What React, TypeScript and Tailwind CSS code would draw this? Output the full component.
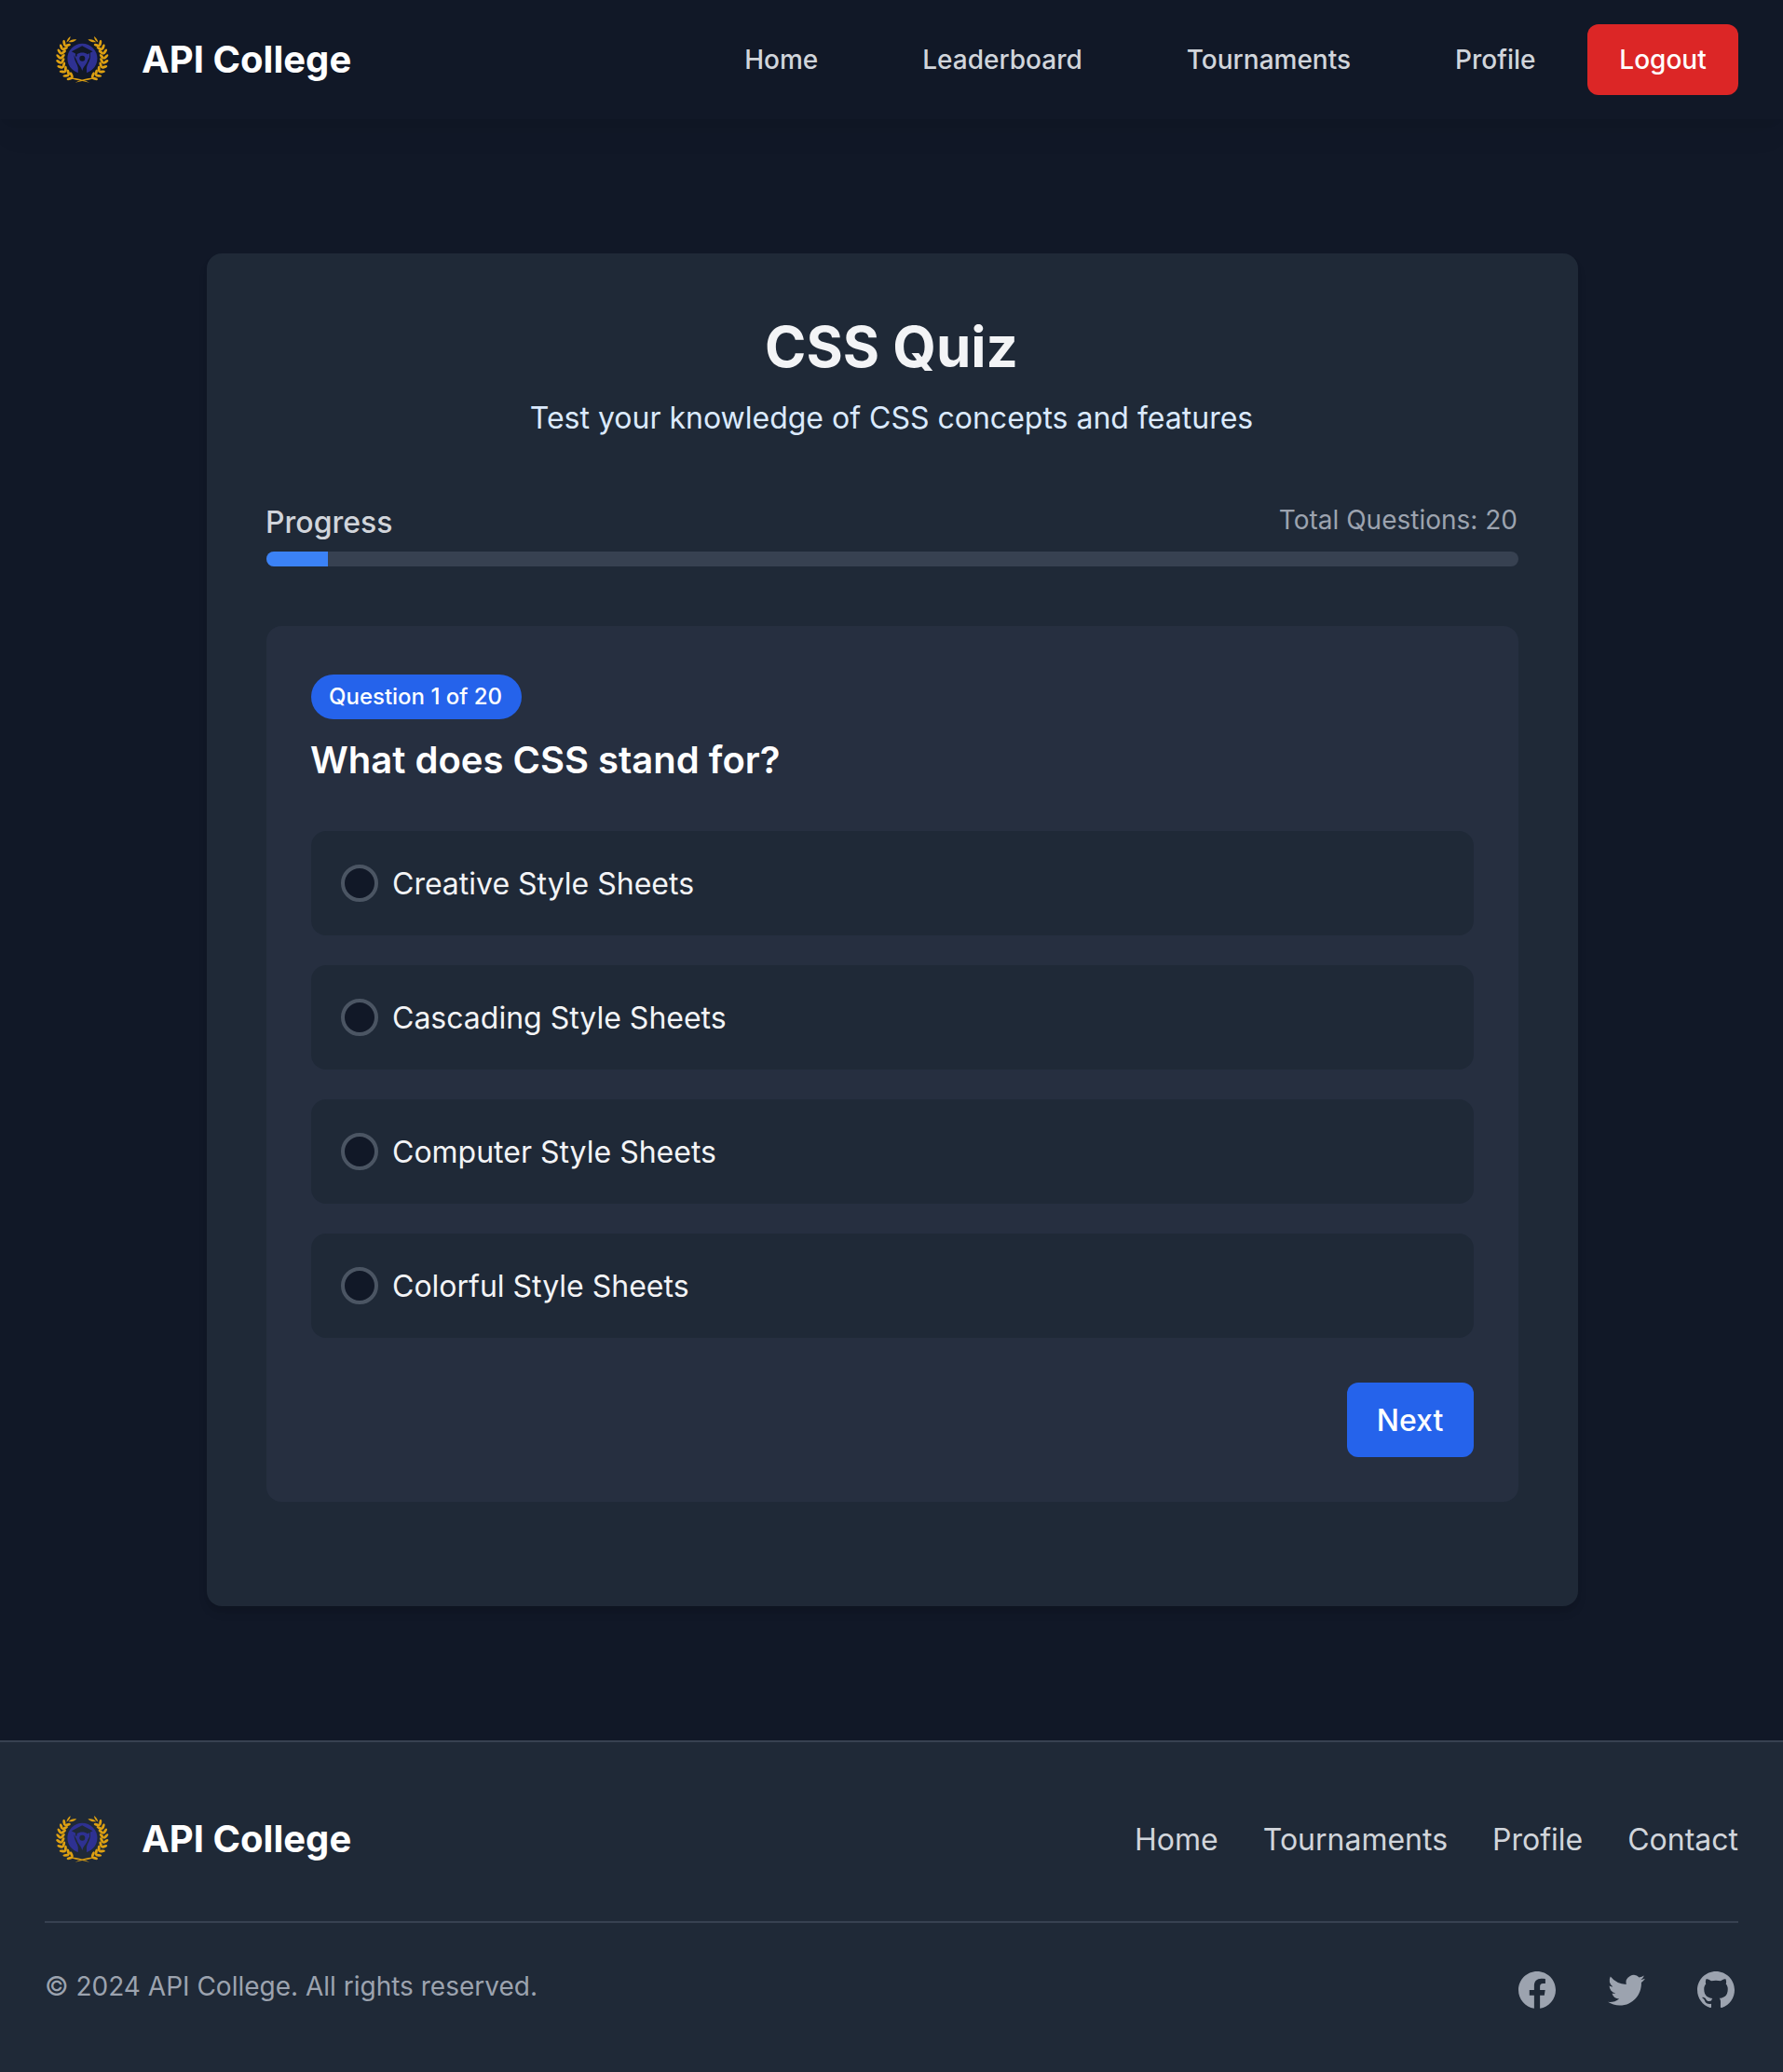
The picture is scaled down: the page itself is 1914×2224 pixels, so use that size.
import React from 'react';

const NAV = ['Home', 'Leaderboard', 'Tournaments', 'Profile'];
const FOOTER_NAV = ['Home', 'Tournaments', 'Profile', 'Contact'];
const OPTIONS = [
  'Creative Style Sheets',
  'Cascading Style Sheets',
  'Computer Style Sheets',
  'Colorful Style Sheets',
];
const SOCIAL = [
  {
    name: 'Facebook',
    d: 'M22 12c0-5.523-4.477-10-10-10S2 6.477 2 12c0 4.991 3.657 9.128 8.438 9.878v-6.987h-2.54V12h2.54V9.797c0-2.506 1.492-3.89 3.777-3.89 1.094 0 2.238.195 2.238.195v2.46h-1.26c-1.243 0-1.63.771-1.63 1.562V12h2.773l-.443 2.89h-2.33v6.988C18.343 21.128 22 16.991 22 12z',
  },
  {
    name: 'Twitter',
    d: 'M8.29 20.251c7.547 0 11.675-6.253 11.675-11.675 0-.178 0-.355-.012-.53A8.348 8.348 0 0022 5.92a8.19 8.19 0 01-2.357.646 4.118 4.118 0 001.804-2.27 8.224 8.224 0 01-2.605.996 4.107 4.107 0 00-6.993 3.743 11.65 11.65 0 01-8.457-4.287 4.106 4.106 0 001.27 5.477A4.072 4.072 0 012.8 9.713v.052a4.105 4.105 0 003.292 4.022 4.095 4.095 0 01-1.853.07 4.108 4.108 0 003.834 2.85A8.233 8.233 0 012 18.407a11.616 11.616 0 006.29 1.84',
  },
  {
    name: 'GitHub',
    d: 'M12 2C6.477 2 2 6.484 2 12.017c0 4.425 2.865 8.18 6.839 9.504.5.092.682-.217.682-.483 0-.237-.008-.868-.013-1.703-2.782.605-3.369-1.343-3.369-1.343-.454-1.158-1.11-1.466-1.11-1.466-.908-.62.069-.608.069-.608 1.003.07 1.531 1.032 1.531 1.032.892 1.53 2.341 1.088 2.91.832.092-.647.35-1.088.636-1.338-2.22-.253-4.555-1.113-4.555-4.951 0-1.093.39-1.988 1.029-2.688-.103-.253-.446-1.272.098-2.65 0 0 .84-.27 2.75 1.026A9.564 9.564 0 0112 6.844c.85.004 1.705.115 2.504.337 1.909-1.296 2.747-1.027 2.747-1.027.546 1.379.202 2.398.1 2.651.64.7 1.028 1.595 1.028 2.688 0 3.848-2.339 4.695-4.566 4.943.359.309.678.92.678 1.855 0 1.338-.012 2.419-.012 2.747 0 .268.18.58.688.482A10.019 10.019 0 0022 12.017C22 6.484 17.522 2 12 2z',
  },
];

/* Stem points of the left laurel branch: x, y and the growth direction in degrees. */
const STEM: [number, number, number][] = [
  [30, 59.5, 208],
  [26, 57, 218],
  [22.3, 53.4, 232],
  [19.6, 49, 245],
  [17.9, 44.2, 257],
  [17.2, 39.2, 270],
  [17.6, 34.2, 281],
  [19, 29.6, 293],
  [21.4, 25.4, 305],
];

function Branch() {
  return (
    <g fill="#dda012">
      {STEM.map(([x, y, a], i) => (
        <g key={i} transform={`translate(${x} ${y}) rotate(${a})`}>
          <ellipse cx="3.2" cy="0" rx="3.4" ry="1.45" transform="rotate(40)" />
          <ellipse cx="3.2" cy="0" rx="3.4" ry="1.45" transform="rotate(-44)" />
        </g>
      ))}
      <path d="M23.4 21.4C23.8 18.6 25.4 16.4 27.6 15C27.6 17.8 26 20.2 23.4 21.4Z" />
      <path d="M25.4 21.2C27.6 18.6 30.6 17.8 34.2 18.4C31.6 20.8 28.6 21.8 25.4 21.2Z" />
      <path d="M29 59.2C35 60.4 41 60.8 48 64.8C41 62.8 34.5 62.4 29 60.6Z" />
    </g>
  );
}

function Logo() {
  return (
    <svg viewBox="0 0 80 80" className="size-20">
      <mask id="emblem-cut">
        <rect width="80" height="80" fill="#fff" />
        <path
          d="M40.2 25.2L51.6 31.2L49 32.6V37H48.2V33L46 34.2C43 31.8 37.6 31.8 34.6 34.2V36.4H33V33.4L28.8 31.2Z"
          fill="#000"
        />
        <circle cx="40.3" cy="38.8" r="3" fill="#000" />
        <path
          d="M31.6 35C32.6 38.6 34.4 39.8 34.8 42C36.4 46 39.2 47.4 40.3 52C41.4 47.4 44.2 46 45.8 42C46.2 39.8 48 38.6 49 35C49.4 41 45.6 44 45 49V56H35.8V49C35 44 31.2 41 31.6 35Z"
          fill="#000"
        />
      </mask>
      <circle cx="40.4" cy="38.8" r="16" fill="#2e3192" mask="url(#emblem-cut)" />
      <Branch />
      <g transform="translate(80.6 0) scale(-1 1)">
        <Branch />
      </g>
    </svg>
  );
}

function Brand() {
  return (
    <div className="flex items-center gap-6">
      <Logo />
      <span className="text-[40px] leading-14 font-bold text-white">API College</span>
    </div>
  );
}

export default function App() {
  return (
    <div className="flex min-h-[2224px] flex-col bg-[#111827] font-['Inter',sans-serif]">
      <header className="flex h-32 items-center justify-between px-12 shadow-[0_20px_30px_-6px_rgba(0,0,0,0.06),0_8px_12px_-8px_rgba(0,0,0,0.06)]">
        <Brand />
        <nav className="flex items-center gap-[55.5px] text-[28px] leading-10 font-medium text-[#d1d5db]">
          <div className="flex gap-28">
            {NAV.map((n) => (
              <a key={n}>{n}</a>
            ))}
          </div>
          <button className="h-[76px] w-[162px] rounded-xl bg-[#dc2626] text-white">Logout</button>
        </nav>
      </header>

      <main className="px-[222px] pt-36 pb-36">
        <section className="h-[1452px] w-[1472px] rounded-2xl bg-[#1f2937] p-16 shadow-[0_8px_12px_-2px_rgba(0,0,0,0.1),0_4px_8px_-4px_rgba(0,0,0,0.1)]">
          <h1 className="pr-0.5 text-center text-6xl leading-18 font-bold text-[#f3f4f6]">CSS Quiz</h1>
          <p className="mt-[17px] pr-0.5 text-center text-[32px] leading-12 text-[#dbeafe]">
            Test your knowledge of CSS concepts and features
          </p>

          <div className="mt-16 flex items-start justify-between">
            <span className="-ml-px text-[32px] leading-12 font-medium text-[#d1d5db]">Progress</span>
            <span className="mt-px mr-px text-[28px] leading-10 text-[#9ca3af]">Total Questions: 20</span>
          </div>
          <div className="mt-[7px] h-4 overflow-hidden rounded-full bg-[#374151]">
            <div className="h-full w-[66px] bg-[#3b82f6]" />
          </div>

          <div className="mt-16 rounded-2xl bg-[#262f40] px-12 pt-13 pb-12">
            <span className="block h-12 w-[226px] rounded-full bg-[#2563eb] py-2 pl-[19px] text-2xl leading-8 font-medium whitespace-nowrap text-white">
              Question 1 of 20
            </span>
            <h2 className="mt-4 -ml-px text-[40px] leading-14 font-semibold text-white">What does CSS stand for?</h2>
            <div className="mt-12 flex flex-col gap-8">
              {OPTIONS.map((o) => (
                <label key={o} className="flex h-28 items-center gap-[15px] rounded-2xl bg-[#1f2937] px-8">
                  <span className="size-10 rounded-full border-4 border-[#4b5563] bg-[#111827]" />
                  <span className="pt-0.5 text-[32px] leading-12 text-[#f3f4f6]">{o}</span>
                </label>
              ))}
            </div>
            <div className="mt-12 flex justify-end">
              <button className="h-20 w-[136px] rounded-xl bg-[#2563eb] pt-0.5 pr-px text-[32px] leading-12 font-medium text-white">
                Next
              </button>
            </div>
          </div>
        </section>
      </main>

      <footer className="grow border-t-2 border-[#374151] bg-[#1f2937] px-12 pt-16">
        <div className="flex items-center justify-between pb-12">
          <Brand />
          <nav className="flex gap-12 pt-0.5 text-[32px] leading-12 text-[#d1d5db]">
            {FOOTER_NAV.map((n) => (
              <a key={n}>{n}</a>
            ))}
          </nav>
        </div>
        <div className="flex items-start justify-between border-t-2 border-[#374151] pt-12">
          <p className="text-[28px] leading-10 text-[#9ca3af]">© 2024 API College. All rights reserved.</p>
          <div className="flex gap-12 text-[#9ca3af]">
            {SOCIAL.map((s) => (
              <svg key={s.name} viewBox="0 0 24 24" fill="currentColor" className="size-12" aria-label={s.name}>
                <path fillRule="evenodd" clipRule="evenodd" d={s.d} />
              </svg>
            ))}
          </div>
        </div>
      </footer>
    </div>
  );
}
